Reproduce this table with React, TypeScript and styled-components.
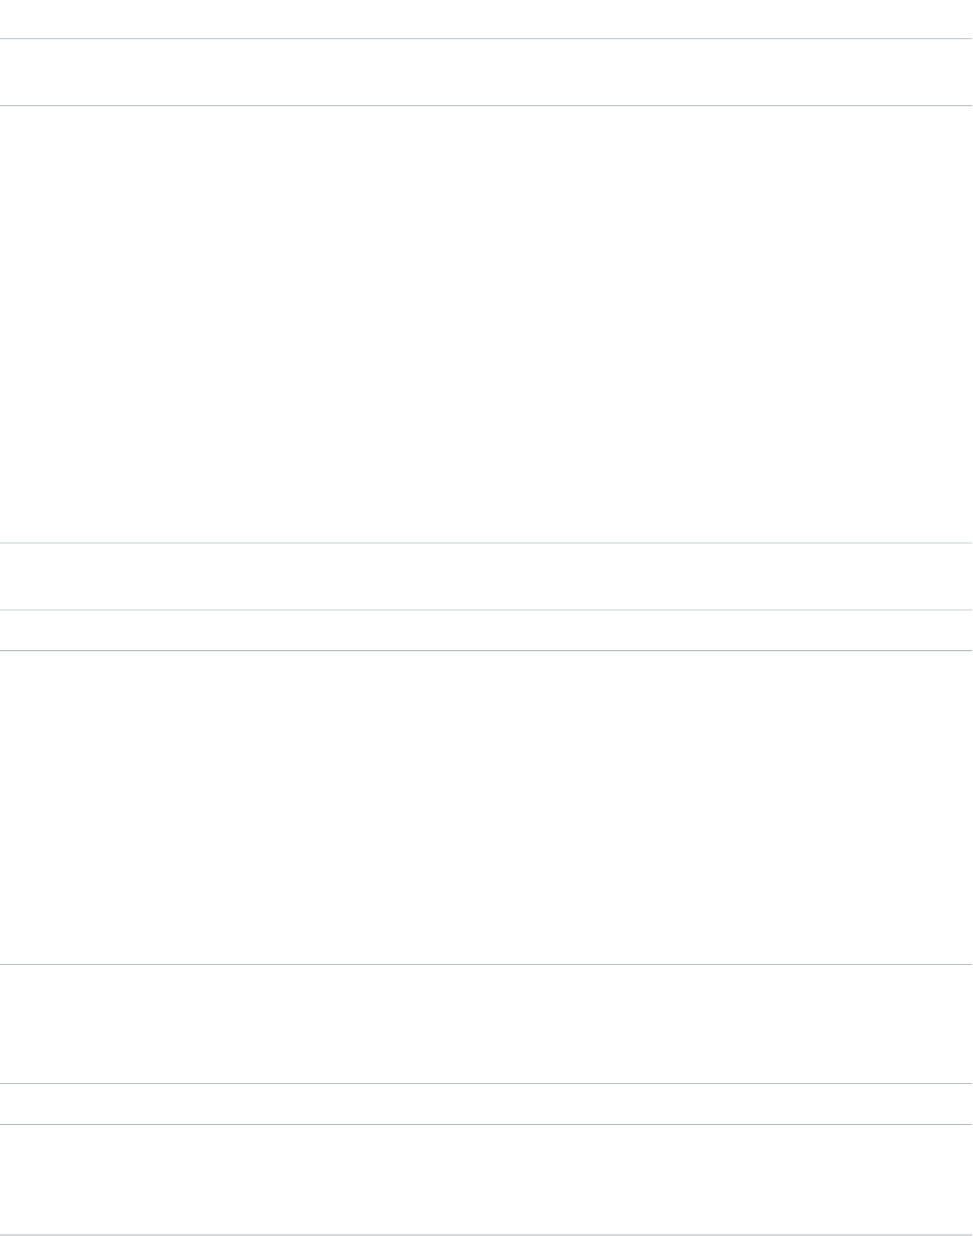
import React from "react";
import styled, { createGlobalStyle } from "styled-components";

const Global = createGlobalStyle`
  html, body { margin: 0; padding: 0; background: #ffffff; }
  body { font-family: "Liberation Sans", Arial, sans-serif; }
`;

const Page = styled.div`
  width: 972px;
  display: flex;
  flex-direction: column;
`;

const Band = styled.section<{ $h: number; $line: string; $w?: number; $glow?: boolean }>`
  box-sizing: content-box;
  height: ${(p) => p.$h}px;
  border-bottom: ${(p) => p.$w ?? 1}px solid ${(p) => p.$line};
  box-shadow: ${(p) => (p.$glow ? "0 1px 0 #eef2f4" : "none")};
`;

const bands = [
  { h: 38, line: "#cbd3d8", glow: true },
  { h: 66, line: "#c0cace", glow: true },
  { h: 436, line: "#e3e8eb", w: 2 },
  { h: 65, line: "#e3e8eb", w: 2 },
  { h: 39, line: "#b3bfc4", glow: true },
  { h: 313, line: "#b6c1c6" },
  { h: 118, line: "#b6c1c6" },
  { h: 40, line: "#afbdc4" },
  { h: 109, line: "#d5d9d9", w: 2 },
];

export default function App() {
  return (
    <>
      <Global />
      <Page>
        {bands.map((b, i) => (
          <Band key={i} $h={b.h} $line={b.line} $w={b.w} $glow={b.glow} />
        ))}
      </Page>
    </>
  );
}
